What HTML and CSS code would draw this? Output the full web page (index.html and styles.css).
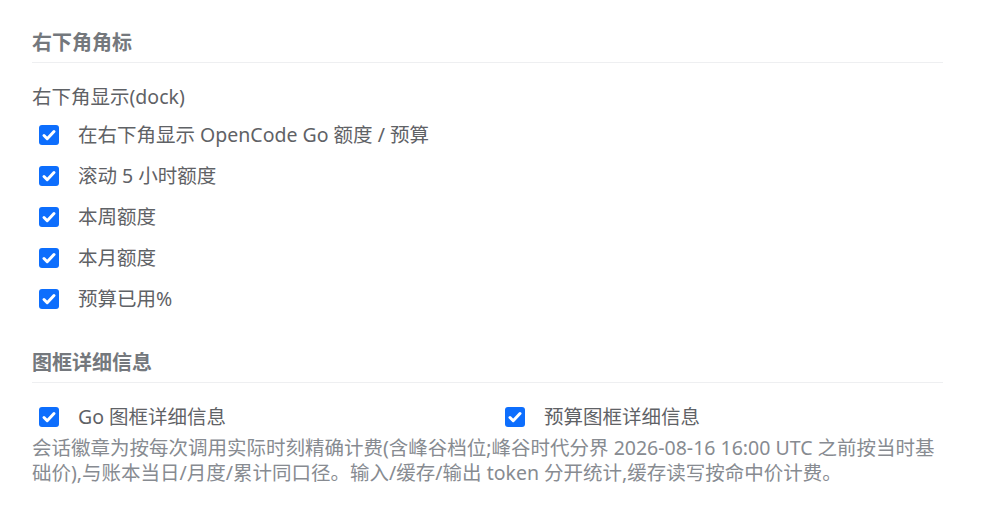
FILE: index.html
```html
<!DOCTYPE html>
<html lang="zh-CN">
<head>
  <meta charset="UTF-8">
  <title>右下角角标</title>
  <link rel="stylesheet" href="styles.css">
</head>
<body>
  <div class="panel">
    <h3 class="section-title">右下角角标</h3>

    <div class="field-label">右下角显示(dock)</div>
    <div class="check-list">
      <label class="check"><span class="box"><svg viewBox="0 0 20 20"><path d="M5 10.5l3.2 3.2L15 6.5" /></svg></span>在右下角显示 OpenCode Go 额度 / 预算</label>
      <label class="check"><span class="box"><svg viewBox="0 0 20 20"><path d="M5 10.5l3.2 3.2L15 6.5" /></svg></span>滚动 5 小时额度</label>
      <label class="check"><span class="box"><svg viewBox="0 0 20 20"><path d="M5 10.5l3.2 3.2L15 6.5" /></svg></span>本周额度</label>
      <label class="check"><span class="box"><svg viewBox="0 0 20 20"><path d="M5 10.5l3.2 3.2L15 6.5" /></svg></span>本月额度</label>
      <label class="check"><span class="box"><svg viewBox="0 0 20 20"><path d="M5 10.5l3.2 3.2L15 6.5" /></svg></span>预算已用%</label>
    </div>

    <h3 class="section-title second">图框详细信息</h3>

    <div class="check-grid">
      <label class="check"><span class="box"><svg viewBox="0 0 20 20"><path d="M5 10.5l3.2 3.2L15 6.5" /></svg></span>Go 图框详细信息</label>
      <label class="check"><span class="box"><svg viewBox="0 0 20 20"><path d="M5 10.5l3.2 3.2L15 6.5" /></svg></span>预算图框详细信息</label>
    </div>
    <p class="hint">会话徽章为按每次调用实际时刻精确计费(含峰谷档位;峰谷时代分界 2026-08-16 16:00 UTC 之前按当时基础价),与账本当日/月度/累计同口径。输入/缓存/输出 token 分开统计,缓存读写按命中价计费。</p>
  </div>
</body>
</html>
```

FILE: styles.css
```css
body { margin: 0; background: #fff; font-family: "Noto Sans", "Noto Sans CJK SC", sans-serif; color: #5f6266; }
.panel { width: 911px; padding: 30px 0 0 32px; }
.section-title { margin: 0; padding-bottom: 6px; font-size: 20px; font-weight: bold; color: #74787d; line-height: 26px; border-bottom: 1px solid #eeeff1; }
.section-title.second { margin-top: 39px; }
.field-label { margin-top: 22px; font-size: 19.5px; line-height: 24px; }
.check-list { display: flex; flex-direction: column; gap: 17px; margin-top: 14px; padding-left: 7px; }
.check { display: flex; align-items: center; font-size: 19.5px; line-height: 24px; }
.box { width: 20px; height: 20px; border-radius: 3px; background: #0d6efd; margin-right: 19px; flex: none; display: flex; }
.box svg { width: 20px; height: 20px; }
.box path { fill: none; stroke: #fff; stroke-width: 3; stroke-linecap: round; stroke-linejoin: round; }
.check-grid { display: grid; grid-template-columns: 466px 1fr; margin-top: 22px; padding-left: 7px; }
.hint { margin: 6px 0 0; font-size: 19.5px; line-height: 25px; color: #878b91; }
```
